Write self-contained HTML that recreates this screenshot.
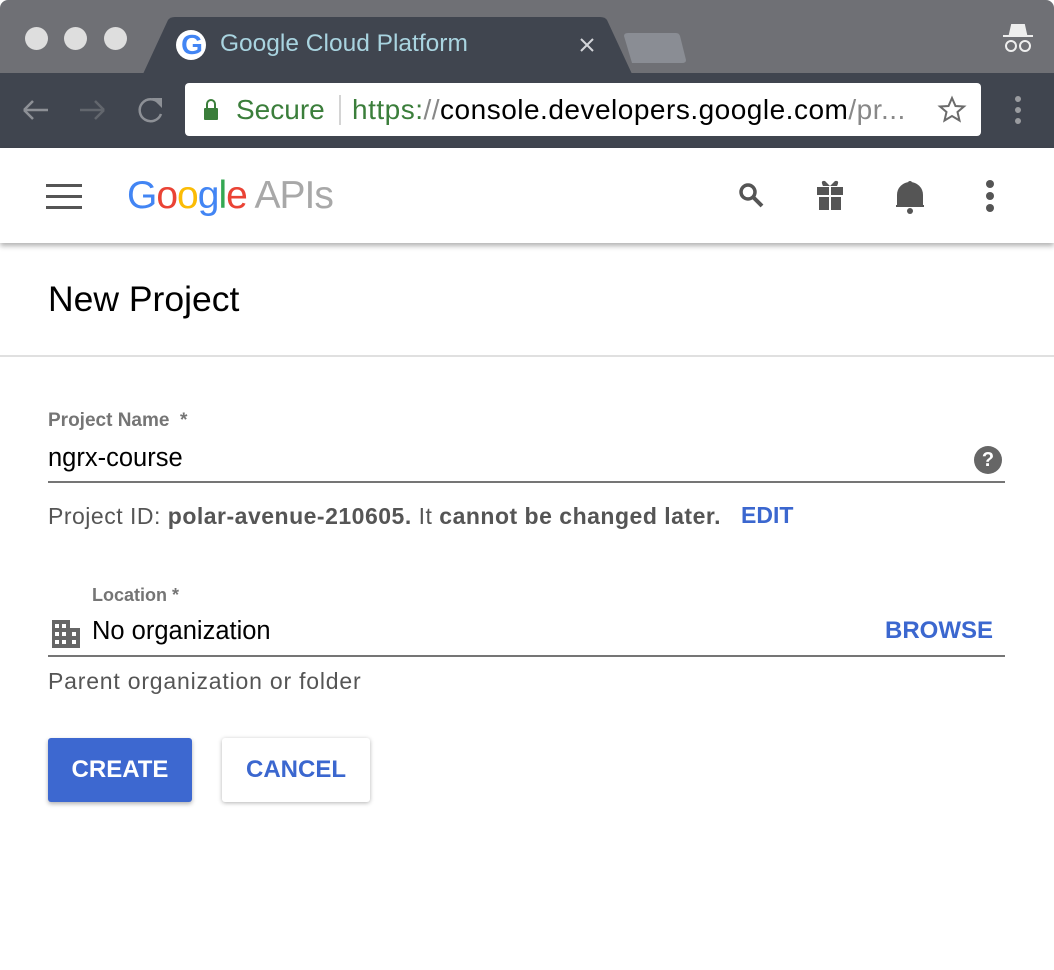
<!DOCTYPE html>
<html><head><style>
*{margin:0;padding:0;box-sizing:border-box}
body{width:1054px;height:970px;background:#fff;font-family:"Liberation Sans",Arial,sans-serif;position:relative;overflow:hidden}
.a{position:absolute}
</style></head><body>
<div class="a" style="left:0;top:0;width:1054px;height:74px;background:#6f7075;border-radius:8px 8px 0 0"></div>
<div class="a" style="left:25px;top:27px;width:23px;height:23px;border-radius:50%;background:#dedede"></div>
<div class="a" style="left:64px;top:27px;width:23px;height:23px;border-radius:50%;background:#dedede"></div>
<div class="a" style="left:104px;top:27px;width:23px;height:23px;border-radius:50%;background:#dedede"></div>
<svg class="a" style="left:0;top:0" width="1054" height="148">
<path d="M143 74 L168 20 Q170 17 175 17 L600 17 Q605 17 607 20 L632 74 Z" fill="#40454f"/>
<path d="M624 36 Q624 33 628 33 L676 33 Q679 33 680 36 L686 60 Q686 63 682 63 L632 63 Z" fill="#8a8d94"/>
<rect x="0" y="73" width="1054" height="75" fill="#40454f"/>
<rect x="185" y="83" width="796" height="53" rx="4" fill="#fff"/>
<circle cx="191" cy="45" r="15" fill="#fff"/>
<path d="M24 110 H48 M24 110 L33 101 M24 110 L33 119" stroke="#8d9096" stroke-width="2.5" fill="none"/>
<path d="M80 110 H104 M104 110 L95 101 M104 110 L95 119" stroke="#62666d" stroke-width="2.5" fill="none"/>
<path d="M159 103 A11 11 0 1 0 161 114" stroke="#8d9096" stroke-width="2.5" fill="none"/>
<path d="M152 98 L162 98 L162 108 Z" fill="#8d9096"/>
<path d="M581 39 L593 51 M593 39 L581 51" stroke="#d4d6da" stroke-width="2"/>
<rect x="204" y="108" width="14" height="12" rx="1" fill="#3b7e3b"/>
<path d="M207 108 V104 A4 4 0 0 1 215 104 V108" stroke="#3b7e3b" stroke-width="2" fill="none"/>
<line x1="340" y1="95" x2="340" y2="125" stroke="#aaa" stroke-width="1"/>
<path d="M952 98 L955.5 106 L964 106.5 L957.5 112 L959.5 120.5 L952 116 L944.5 120.5 L946.5 112 L940 106.5 L948.5 106 Z" stroke="#6b6b6b" stroke-width="2" fill="none"/>
<circle cx="1018" cy="99" r="3" fill="#9a9ca0"/><circle cx="1018" cy="110" r="3" fill="#9a9ca0"/><circle cx="1018" cy="121" r="3" fill="#9a9ca0"/>
<path d="M1010 34 L1012 25 H1024 L1026 34 Z M1003 36 H1033" stroke="#eee" stroke-width="2" fill="#eee"/>
<circle cx="1011" cy="46" r="5" stroke="#eee" stroke-width="2" fill="none"/><circle cx="1025" cy="46" r="5" stroke="#eee" stroke-width="2" fill="none"/>
</svg>
<div class="a" style="left:178px;top:31px;width:28px;height:28px;font:bold 28px/28px 'Liberation Sans';color:#4285f4;text-align:center">G</div>
<div class="a" style="left:220px;top:30px;font-size:24.5px;color:#a9d4e0;white-space:nowrap">Google Cloud Platform</div>
<div class="a" style="left:236px;top:94px;font-size:28px;color:#3b7e3b">Secure</div>
<div class="a" style="left:352px;top:94px;font-size:28px;letter-spacing:0.5px;color:#000;white-space:nowrap"><span style="color:#3b7e3b">https:</span><span style="color:#888">//</span>console.developers.google.com<span style="color:#888">/pr...</span></div>

<div class="a" style="left:0;top:148px;width:1054px;height:95px;background:#fff;box-shadow:0 3px 5px rgba(0,0,0,.3)"></div>
<div class="a" style="left:46px;top:184px;width:36px;height:3px;background:#555"></div>
<div class="a" style="left:46px;top:195px;width:36px;height:3px;background:#555"></div>
<div class="a" style="left:46px;top:206px;width:36px;height:3px;background:#555"></div>
<div class="a" style="left:127px;top:174px;font-size:39px;letter-spacing:-1px;white-space:nowrap"><span style="color:#4285f4">G</span><span style="color:#ea4335">o</span><span style="color:#fbbc05">o</span><span style="color:#4285f4">g</span><span style="color:#34a853">l</span><span style="color:#ea4335">e</span> <span style="color:#a8a8a8">APIs</span></div>
<svg class="a" style="left:730px;top:175px" width="280" height="45">
<circle cx="18" cy="17" r="7" stroke="#555" stroke-width="3.5" fill="none"/><path d="M23 22 L32 31" stroke="#555" stroke-width="4"/>
<rect x="87" y="12" width="26" height="8" fill="#555"/><rect x="89" y="22" width="22" height="13" fill="#555"/><rect x="99" y="12" width="2" height="23" fill="#fff"/>
<path d="M93 11 Q90 5 95 6 L100 11 L105 6 Q110 5 107 11 Z" fill="#555"/>
<path d="M168 31 V20 A12 12 0 0 1 192 20 V31 Z M166 31 H194" stroke="#555" stroke-width="2" fill="#555"/><circle cx="180" cy="36" r="3" fill="#555"/><circle cx="180" cy="8" r="2" fill="#555"/>
<circle cx="260" cy="9" r="4" fill="#555"/><circle cx="260" cy="21" r="4" fill="#555"/><circle cx="260" cy="33" r="4" fill="#555"/>
</svg>

<div class="a" style="left:48px;top:279px;font-size:35.5px;color:#000;white-space:nowrap">New Project</div>
<div class="a" style="left:0;top:355px;width:1054px;height:2px;background:#e0e0e0"></div>

<div class="a" style="left:48px;top:410px;font-size:19px;font-weight:bold;color:#757575;white-space:nowrap">Project Name&nbsp; *</div>
<div class="a" style="left:48px;top:444px;font-size:25.5px;color:#000">ngrx-course</div>
<div class="a" style="left:974px;top:446px;width:28px;height:28px;border-radius:50%;background:#666;color:#fff;font:bold 20px/28px 'Liberation Sans';text-align:center">?</div>
<div class="a" style="left:48px;top:481px;width:957px;height:2px;background:#757575"></div>
<div class="a" style="left:48px;top:503px;font-size:23px;letter-spacing:0.5px;color:#555;white-space:nowrap">Project ID: <b>polar-avenue-210605.</b> It <b>cannot be changed later.</b></div>
<div class="a" style="left:741px;top:502px;font-size:23px;font-weight:bold;color:#3b67cf">EDIT</div>

<div class="a" style="left:92px;top:585px;font-size:18px;font-weight:bold;color:#757575">Location *</div>
<svg class="a" style="left:52px;top:620px" width="28" height="28"><rect x="0" y="0" width="18" height="28" fill="#666"/><rect x="18" y="8" width="10" height="20" fill="#666"/>
<g fill="#fff"><rect x="3" y="4" width="4" height="4"/><rect x="10" y="4" width="4" height="4"/><rect x="3" y="12" width="4" height="4"/><rect x="10" y="12" width="4" height="4"/><rect x="20" y="12" width="4" height="4"/><rect x="3" y="20" width="4" height="4"/><rect x="10" y="20" width="4" height="4"/><rect x="20" y="20" width="4" height="4"/></g></svg>
<div class="a" style="left:92px;top:617px;font-size:25.5px;color:#000;white-space:nowrap">No organization</div>
<div class="a" style="left:885px;top:617px;font-size:24px;font-weight:bold;color:#3b67cf">BROWSE</div>
<div class="a" style="left:48px;top:655px;width:957px;height:2px;background:#757575"></div>
<div class="a" style="left:48px;top:668px;font-size:23px;letter-spacing:0.8px;color:#555;white-space:nowrap">Parent organization or folder</div>

<div class="a" style="left:48px;top:738px;width:144px;height:64px;background:#3d68d0;border-radius:3px;box-shadow:0 2px 4px rgba(0,0,0,.3);color:#fff;font-size:24px;font-weight:bold;line-height:64px;text-align:center">CREATE</div>
<div class="a" style="left:222px;top:738px;width:148px;height:64px;background:#fff;border-radius:3px;box-shadow:0 1px 4px rgba(0,0,0,.3);color:#3b67cf;font-size:24px;font-weight:bold;line-height:64px;text-align:center">CANCEL</div>
</body></html>
